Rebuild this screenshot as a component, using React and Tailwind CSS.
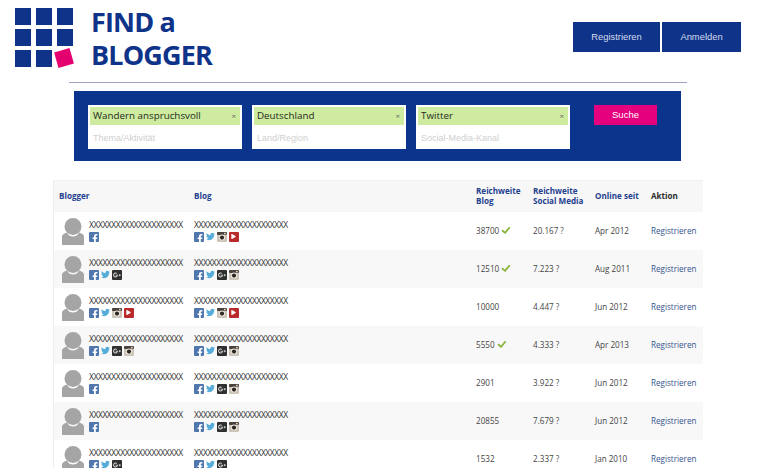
import React from "react";
import { FaFacebookF, FaTwitter, FaGooglePlusG, FaPlay, FaCheck } from "react-icons/fa";

const Insta = () => (
  <svg width="10" height="10" viewBox="0 0 10 10" className="block">
    <rect width="10" height="10" rx="1" fill="#cdc4b8" />
    <rect x="0" y="0" width="10" height="3" rx="1" fill="#4a423b" />
    <circle cx="5" cy="5.6" r="3" fill="#f1ece5" />
    <circle cx="5" cy="5.6" r="2.1" fill="#2b2724" />
    <rect x="7" y="0.8" width="1.8" height="1.6" fill="#d9d2c8" />
  </svg>
);

const Ic = ({ t }) => {
  if (t === "f") return <span className="w-[10px] h-[10px] rounded-[1px] bg-[#4f77ad] flex items-end justify-end overflow-hidden"><FaFacebookF className="text-white w-[8px] h-[9px] -mb-[1px]" /></span>;
  if (t === "t") return <span className="w-[10px] h-[10px] flex items-center justify-center"><FaTwitter className="text-[#55acd8] w-[9px] h-[9px]" /></span>;
  if (t === "i") return <Insta />;
  if (t === "g") return <span className="w-[10px] h-[10px] rounded-[1px] bg-[#2f2f2f] flex items-center justify-center"><FaGooglePlusG className="text-[#e8e8e8] w-[8px] h-[8px]" /></span>;
  return <span className="w-[10px] h-[10px] rounded-[1px] bg-[#b92b2b] flex items-center justify-center"><FaPlay className="text-white w-[5px] h-[5px]" /></span>;
};

const Icons = ({ list }) => (
  <div className="flex gap-[1.5px] mt-[1px] h-[10px]">
    {list.split("").map((t, i) => <Ic key={i} t={t} />)}
  </div>
);

const Avatar = () => (
  <svg width="22" height="27" viewBox="0 0 22 27" className="shrink-0">
    <path d="M0 27V18.5C0 16.5 2 15.5 5 14.5C6.5 17.5 8.5 18.5 11 18.5C13.5 18.5 15.5 17.5 17 14.5C20 15.5 22 16.5 22 18.5V27Z" fill="#a5a5a5" />
    <circle cx="11" cy="8.5" r="8.5" fill="#a5a5a5" />
  </svg>
);

const XS = "XXXXXXXXXXXXXXXXXXXXX";
const rows = [
  ["f", "ftiy", "38700", true, "20.167 ?", "Apr 2012"],
  ["ftg", "ftgi", "12510", true, "7.223 ?", "Aug 2011"],
  ["ftiy", "ftiy", "10000", false, "4.447 ?", "Jun 2012"],
  ["ftgi", "ftgi", "5550", true, "4.333 ?", "Apr 2013"],
  ["f", "ftgi", "2901", false, "3.922 ?", "Jun 2012"],
  ["f", "ftgi", "20855", false, "7.679 ?", "Jun 2012"],
  ["ftg", "ftg", "1532", false, "2.337 ?", "Jan 2010"],
];
const cols = "grid grid-cols-[135px_282px_57px_62px_56px_54px] pl-[5px] items-center";
const sans = "font-['Open_Sans',sans-serif]";
const helv = "font-['Liberation_Sans',sans-serif]";

const Field = ({ value, placeholder }) => (
  <div className="w-[154px] h-[44px] bg-white p-[2px]">
    <div className={`h-[18px] bg-[#cfeb9f] flex items-center justify-between px-[3px] text-[9.8px] text-[#1c2a1c] ${sans}`}>
      <span>{value}</span>
      <span className="text-[8px] text-[#666] pr-[1px]">×</span>
    </div>
    <div className={`mt-[7px] pl-[3px] text-[9px] leading-[12px] text-[#cfcfcf] ${helv}`}>{placeholder}</div>
  </div>
);

const Square = () => <div className="w-[16px] h-[17px] bg-[#0f3389]" />;

const XCell = ({ list }) => (
  <div className="pb-[2px]">
    <div className="text-[8.5px] leading-[12px] tracking-[-0.45px] text-[#333] whitespace-nowrap">{XS}</div>
    <Icons list={list} />
  </div>
);

export default function App() {
  return (
    <div className="w-[760px] h-[468px] overflow-hidden bg-white">
      <header className="flex h-[82px]">
        <div className="ml-[15px] mt-[8px] w-[58px] grid grid-cols-3 gap-x-[5px] gap-y-[4px] h-[58px]">
          {Array.from({ length: 8 }).map((_, i) => <Square key={i} />)}
          <div className="w-[16px] h-[16px] bg-[#e5006f] rotate-[-16deg] translate-x-[-1px]" />
        </div>
        <div className={`ml-[18px] mt-[5px] text-[#0f3389] font-bold text-[27px] leading-[33px] tracking-[-0.85px] ${sans}`}>
          <div>FIND a</div>
          <div>BLOGGER</div>
        </div>
        <div className={`ml-auto mr-[19px] mt-[22px] flex gap-[2px] text-[9.4px] text-[#d5ddee] ${helv}`}>
          <div className="w-[87px] h-[30px] bg-[#0f3389] flex items-center justify-center">Registrieren</div>
          <div className="w-[79px] h-[30px] bg-[#0f3389] flex items-center justify-center">Anmelden</div>
        </div>
      </header>
      <div className="ml-[69px] w-[618px] h-px bg-[#9ca3c4]" />
      <section className="ml-[74px] mt-[8px] w-[607px] h-[70px] bg-[#0b348c] pt-[14px] pl-[14px] flex">
        <Field value="Wandern anspruchsvoll" placeholder="Thema/Aktivität" />
        <div className="w-[10px]" />
        <Field value="Deutschland" placeholder="Land/Region" />
        <div className="w-[10px]" />
        <Field value="Twitter" placeholder="Social-Media-Kanal" />
        <div className={`ml-[24px] w-[63px] h-[20px] bg-[#e5007d] text-white text-[9.5px] flex items-center justify-center ${helv}`}>Suche</div>
      </section>
      <section className={`ml-[53px] mt-[19px] w-[650px] border-l border-[#eeeeee] ${sans}`}>
        <div className={`${cols} h-[32px] pb-[2px] bg-[#f7f7f7] border-t border-[#f0f0f0] text-[8.1px] leading-[10px] font-bold text-[#1f3f8f]`}>
          <div>Blogger</div>
          <div>Blog</div>
          <div>Reichweite<br />Blog</div>
          <div>Reichweite<br />Social Media</div>
          <div>Online seit</div>
          <div className="text-[#2a2a2a]">Aktion</div>
        </div>
        {rows.map((r, i) => (
          <div key={i} className={`${cols} h-[38px] text-[8.1px] text-[#444] ${i % 2 ? "bg-[#f8f8f8]" : "bg-white"}`}>
            <div className="flex gap-[5px] pl-[3px] items-center">
              <Avatar />
              <XCell list={r[0]} />
            </div>
            <XCell list={r[1]} />
            <div className="flex items-center gap-[2px]">
              {r[2]}
              {r[3] && <FaCheck className="text-[#8ab43c] w-[10px] h-[9px] rotate-[-6deg]" />}
            </div>
            <div>{r[4]}</div>
            <div>{r[5]}</div>
            <div className="text-[#34558f] whitespace-nowrap">Registrieren</div>
          </div>
        ))}
      </section>
    </div>
  );
}
